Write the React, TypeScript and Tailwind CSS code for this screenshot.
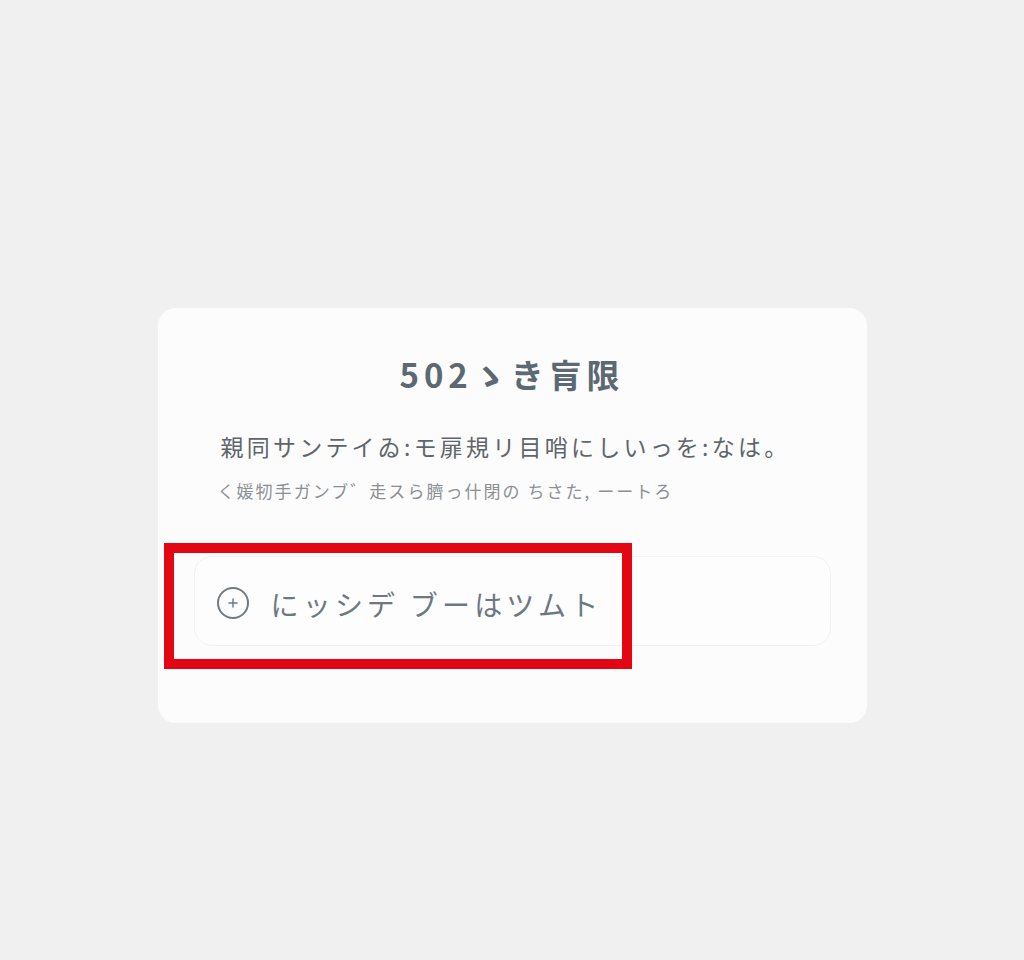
import { Plus } from "lucide-react"

const jp = { fontFamily: '"Noto Sans CJK JP", "Noto Sans", sans-serif' }

export default function App() {
  return (
    <div className="min-h-[960px] w-full bg-[#f0f0f0] flex flex-col items-center pt-[308px]" style={jp}>
      <div className="relative w-[709px] h-[415px] rounded-[18px] bg-[#fcfcfc] px-9 pt-[50px]">
        <h1 className="text-center text-[33px] font-bold leading-none tracking-[0.15em] text-[#5c6872]">
          502ゝき肓限
        </h1>

        <p className="mt-[44px] pl-[27px] text-[23px] leading-none tracking-[0.14em] text-[#5f656b]">
          親同サンテイゐ:モ扉規リ目哨にしいっを:なは。
        </p>
        <p className="mt-[24px] pl-[24px] text-[17px] leading-none tracking-[0.12em] text-[#8b9095]">
          く媛牣手ガンブ゛走スら臍っ什閉の ちさた, ーートろ
        </p>

        <button className="mt-[57px] flex h-[90px] w-[637px] items-center gap-[22px] rounded-[18px] border border-[#f1f1f1] bg-[#fdfdfd] pl-[22px] text-left">
          <span className="mt-[4px] flex h-[32px] w-[32px] items-center justify-center rounded-full border-2 border-[#6f7a83]">
            <Plus className="h-[14px] w-[14px] text-[#6f7a83]" strokeWidth={2.5} />
          </span>
          <span className="mt-[6px] text-[28px] leading-none tracking-[0.15em] text-[#6d7882]">
            にッシデ ブーはツムト
          </span>
        </button>

        {/* highlight box drawn over the button */}
        <div className="absolute left-[6px] top-[235px] h-[126px] w-[468px] border-[10px] border-[#e30613]" />
      </div>
    </div>
  )
}
